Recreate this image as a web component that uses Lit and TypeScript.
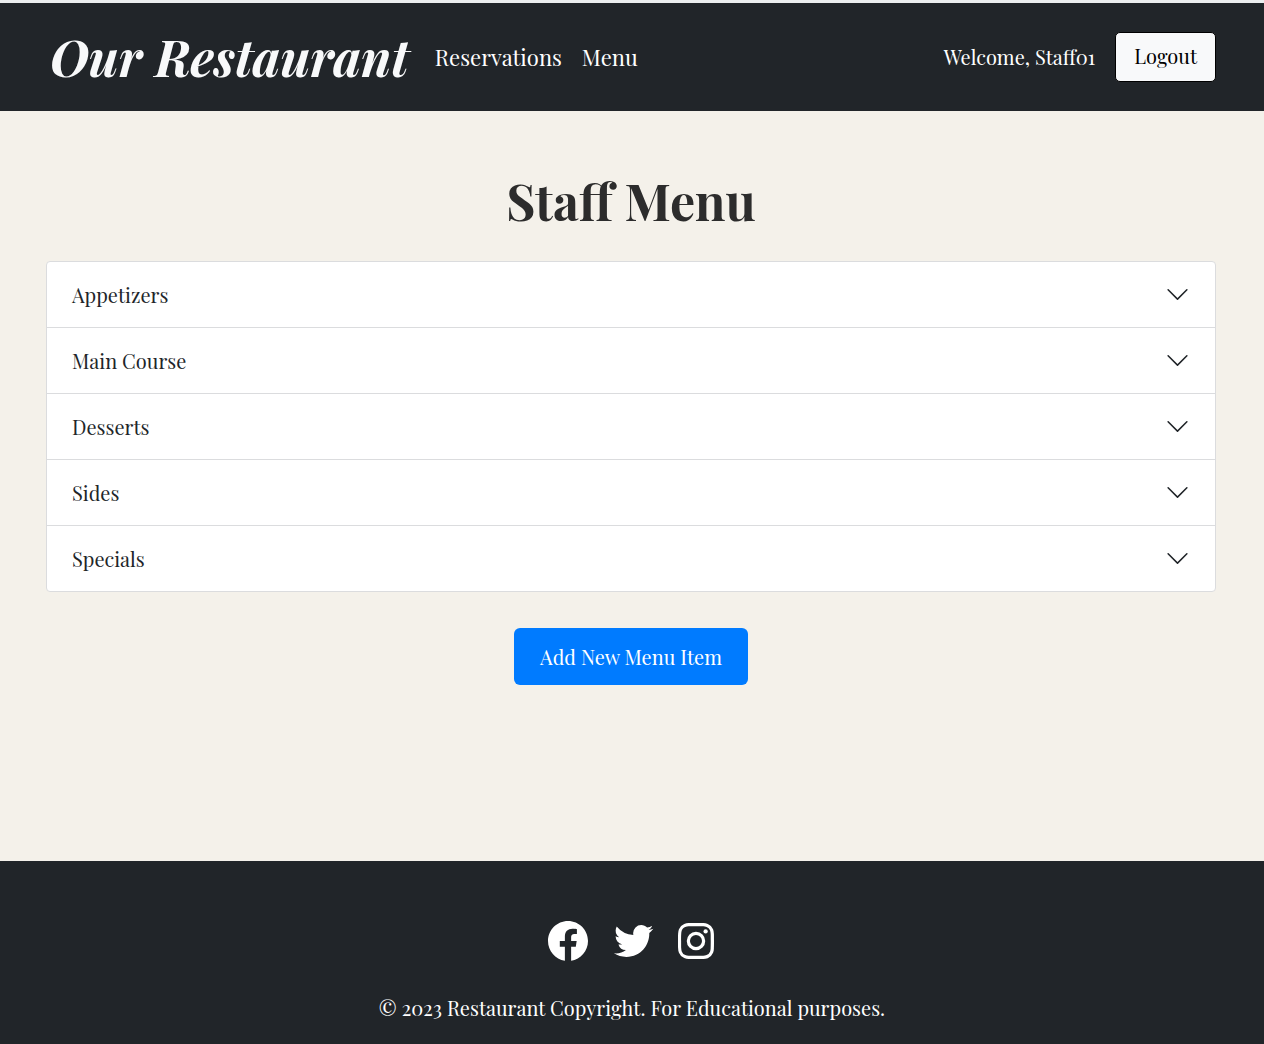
import { LitElement, html, css } from "lit";
import { customElement, state } from "lit/decorators.js";
import { classMap } from "lit/directives/class-map.js";

const SECTIONS = ["Appetizers", "Main Course", "Desserts", "Sides", "Specials"];

@customElement("menu-accordion")
export class MenuAccordion extends LitElement {
  @state() private open = -1;

  static styles = css`
    :host {
      display: block;
    }
    .list {
      margin: 0;
      padding: 0;
      list-style: none;
      background: #ffffff;
      border: 1px solid #dbdcde;
      border-radius: 4px;
      overflow: hidden;
    }
    .item + .item {
      border-top: 1px solid #dbdcde;
    }
    .heading {
      margin: 0;
      font: inherit;
    }
    .toggle {
      display: flex;
      align-items: center;
      justify-content: space-between;
      width: 100%;
      height: 65px;
      padding: 0 25px;
      border: 0;
      background: transparent;
      color: #212529;
      font-family: inherit;
      font-size: 20px;
      line-height: 30px;
      text-align: left;
      cursor: pointer;
    }
    .chevron {
      width: 25px;
      height: 25px;
      fill: #212529;
      transition: transform 0.2s ease-in-out;
    }
    .chevron.open {
      transform: rotate(180deg);
    }
  `;

  render() {
    return html`
      <ul class="list">
        ${SECTIONS.map(
          (name, i) => html`
            <li class="item">
              <h2 class="heading">
                <button
                  class="toggle"
                  type="button"
                  aria-expanded=${this.open === i ? "true" : "false"}
                  @click=${() => (this.open = this.open === i ? -1 : i)}
                >
                  <span>${name}</span>
                  <svg
                    class=${classMap({ chevron: true, open: this.open === i })}
                    viewBox="0 0 16 16"
                    aria-hidden="true"
                  >
                    <path
                      d="M1.646 4.646a.5.5 0 0 1 .708 0L8 10.293l5.646-5.647a.5.5 0 0 1 .708.708l-6 6a.5.5 0 0 1-.708 0l-6-6a.5.5 0 0 1 0-.708z"
                    />
                  </svg>
                </button>
              </h2>
            </li>
          `
        )}
      </ul>
    `;
  }
}

@customElement("app-root")
export class AppRoot extends LitElement {
  static styles = css`
    :host {
      display: flex;
      flex-direction: column;
      box-sizing: border-box;
      min-height: 100vh;
      background: #f4f1ea;
      color: #212529;
      font-family: "Playfair Display", "Liberation Serif", serif;
      font-size: 20px;
      line-height: 30px;
    }
    .header {
      display: flex;
      align-items: center;
      box-sizing: border-box;
      min-height: 111px;
      padding: 0 48px 0 50px;
      background: #212529;
      border-top: 3px solid #eceeef;
    }
    .brand {
      color: #f8f9fa;
      font-size: 50px;
      font-style: italic;
      font-weight: 700;
      line-height: 64px;
      text-decoration: none;
      white-space: nowrap;
    }
    .nav {
      display: flex;
      gap: 20px;
      margin-left: 26px;
    }
    .link {
      color: #ffffff;
      font-size: 22px;
      text-decoration: none;
    }
    .account {
      display: flex;
      align-items: center;
      gap: 20px;
      margin-left: auto;
      color: #ffffff;
      white-space: nowrap;
    }
    .logout {
      height: 50px;
      padding: 0 18px 2px;
      border: 1px solid #000000;
      border-radius: 5px;
      background: #f8f9fa;
      color: #000000;
      font-family: inherit;
      font-size: 20px;
      line-height: 30px;
      cursor: pointer;
    }
    .main {
      flex: 1;
      padding: 58px 48px 48px 46px;
    }
    .title {
      margin: 0 0 28px;
      color: #2c2c2c;
      font-size: 50px;
      font-weight: 700;
      line-height: 64px;
      text-align: center;
    }
    .actions {
      display: flex;
      justify-content: center;
      margin-top: 36px;
    }
    .add {
      height: 57px;
      padding: 0 26px;
      border: 0;
      border-radius: 6px;
      background: #007bff;
      color: #ffffff;
      font-family: inherit;
      font-size: 20px;
      line-height: 30px;
      cursor: pointer;
    }
    .footer {
      display: flex;
      flex-direction: column;
      align-items: center;
      gap: 28px;
      padding: 56px 48px 21px;
      background: #212529;
      color: #ffffff;
      text-align: center;
    }
    .social {
      display: flex;
      gap: 16px;
    }
    .social-link {
      display: flex;
      color: #ffffff;
    }
    .icon {
      width: 48px;
      height: 48px;
      fill: currentColor;
    }
    .copyright {
      margin: 0;
    }
  `;

  render() {
    return html`
      <header class="header">
        <a class="brand" href="#">Our Restaurant</a>
        <nav class="nav">
          <a class="link" href="#reservations">Reservations</a>
          <a class="link" href="#menu">Menu</a>
        </nav>
        <div class="account">
          <span>Welcome, Staff01</span>
          <button class="logout" type="button">Logout</button>
        </div>
      </header>

      <main class="main">
        <h1 class="title">Staff Menu</h1>
        <menu-accordion></menu-accordion>
        <div class="actions">
          <button class="add" type="button">Add New Menu Item</button>
        </div>
      </main>

      <footer class="footer">
        <div class="social">
          <a class="social-link" href="#facebook" aria-label="Facebook">
            <svg class="icon" viewBox="0 0 24 24" aria-hidden="true">
              <path
                d="M12.001 2.002c-5.522 0-9.999 4.477-9.999 9.999 0 4.99 3.656 9.126 8.437 9.879v-6.988h-2.54v-2.891h2.54V9.798c0-2.508 1.493-3.891 3.776-3.891 1.094 0 2.24.195 2.24.195v2.459h-1.264c-1.24 0-1.628.772-1.628 1.563v1.875h2.771l-.443 2.891h-2.328v6.988C18.344 21.129 22 16.992 22 12.001c0-5.522-4.477-9.999-9.999-9.999z"
              />
            </svg>
          </a>
          <a class="social-link" href="#twitter" aria-label="Twitter">
            <svg class="icon" viewBox="-1 0 24 24" aria-hidden="true">
              <path
                d="M19.633 7.997c.013.175.013.349.013.523 0 5.325-4.053 11.461-11.46 11.461-2.282 0-4.402-.661-6.186-1.809.324.037.636.05.973.05a8.07 8.07 0 0 0 5.001-1.721 4.036 4.036 0 0 1-3.767-2.793c.249.037.499.062.761.062.361 0 .724-.05 1.061-.137a4.027 4.027 0 0 1-3.23-3.953v-.05c.537.299 1.16.486 1.82.511a4.022 4.022 0 0 1-1.796-3.354c0-.748.199-1.434.548-2.032a11.457 11.457 0 0 0 8.306 4.215c-.062-.3-.1-.611-.1-.923a4.026 4.026 0 0 1 4.028-4.028c1.16 0 2.207.486 2.943 1.272a7.957 7.957 0 0 0 2.556-.973 4.02 4.02 0 0 1-1.771 2.22 8.073 8.073 0 0 0 2.319-.624 8.645 8.645 0 0 1-2.019 2.083z"
              />
            </svg>
          </a>
          <a class="social-link" href="#instagram" aria-label="Instagram">
            <svg class="icon" viewBox="0 0 24 24" aria-hidden="true">
              <path
                d="M11.999 7.377a4.623 4.623 0 1 0 0 9.248 4.623 4.623 0 0 0 0-9.248zm0 7.627a3.004 3.004 0 1 1 0-6.008 3.004 3.004 0 0 1 0 6.008z"
              />
              <circle cx="16.806" cy="7.207" r="1.078" />
              <path
                d="M20.533 6.111A4.605 4.605 0 0 0 17.9 3.479a6.606 6.606 0 0 0-2.186-.42c-.963-.042-1.268-.054-3.71-.054s-2.755 0-3.71.054a6.554 6.554 0 0 0-2.184.42 4.6 4.6 0 0 0-2.633 2.632 6.585 6.585 0 0 0-.419 2.186c-.043.962-.056 1.267-.056 3.71 0 2.442 0 2.753.056 3.71.015.748.156 1.486.419 2.187a4.61 4.61 0 0 0 2.634 2.632 6.584 6.584 0 0 0 2.185.45c.963.042 1.268.055 3.71.055s2.755 0 3.71-.055a6.615 6.615 0 0 0 2.186-.419 4.613 4.613 0 0 0 2.633-2.633c.263-.7.404-1.438.419-2.186.043-.962.056-1.267.056-3.71s0-2.753-.056-3.71a6.581 6.581 0 0 0-.421-2.217zm-1.218 9.532a5.043 5.043 0 0 1-.311 1.688 2.987 2.987 0 0 1-1.712 1.711 4.985 4.985 0 0 1-1.67.311c-.95.044-1.218.055-3.654.055-2.438 0-2.687 0-3.655-.055a4.96 4.96 0 0 1-1.669-.311 2.985 2.985 0 0 1-1.719-1.711 5.08 5.08 0 0 1-.311-1.669c-.043-.95-.053-1.218-.053-3.654 0-2.437 0-2.686.053-3.655a5.038 5.038 0 0 1 .311-1.687c.305-.789.93-1.41 1.719-1.712a5.01 5.01 0 0 1 1.669-.311c.951-.043 1.218-.055 3.655-.055s2.687 0 3.654.055a4.96 4.96 0 0 1 1.67.311 2.991 2.991 0 0 1 1.712 1.712 5.08 5.08 0 0 1 .311 1.669c.043.951.055 1.218.055 3.655 0 2.436 0 2.698-.043 3.654h-.011z"
              />
            </svg>
          </a>
        </div>
        <p class="copyright">© 2023 Restaurant Copyright. For Educational purposes.</p>
      </footer>
    `;
  }
}
